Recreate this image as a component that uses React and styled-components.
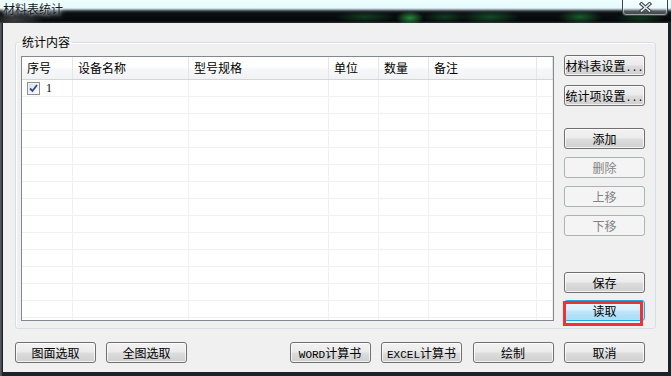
import React from "react";
import styled, { createGlobalStyle, css } from "styled-components";

const GlobalStyle = createGlobalStyle`
  html, body {
    margin: 0;
    padding: 0;
    background: #23292d;
  }
  body {
    width: 671px;
    height: 376px;
    overflow: hidden;
    font-family: "Noto Sans CJK SC", "Liberation Sans", sans-serif;
  }
`;

const Window = styled.div`
  width: 671px;
  height: 376px;
  display: flex;
  flex-direction: column;
  background: linear-gradient(to right, #3b4044 0, #6a6f73 1px, #1d2226 2px, #1d2226 100%);
  overflow: hidden;
  font-size: 12px;
  color: #000;
`;

const TitleBar = styled.div`
  height: 23px;
  flex: none;
  display: flex;
  align-items: flex-start;
  background:
    radial-gradient(ellipse 14px 7px at 410px 18px, rgba(60, 220, 90, 0.6), transparent),
    radial-gradient(ellipse 30px 6px at 365px 17px, rgba(30, 120, 55, 0.45), transparent),
    radial-gradient(ellipse 22px 6px at 445px 17px, rgba(30, 130, 60, 0.4), transparent),
    radial-gradient(ellipse 30px 7px at 490px 17px, rgba(35, 150, 65, 0.45), transparent),
    radial-gradient(ellipse 22px 7px at 580px 17px, rgba(40, 170, 70, 0.5), transparent),
    radial-gradient(ellipse 25px 6px at 640px 18px, rgba(30, 120, 55, 0.4), transparent),
    radial-gradient(ellipse 30px 6px at 15px 20px, rgba(120, 120, 120, 0.45), transparent),
    linear-gradient(
      to bottom,
      #ecfefe 0,
      #e6fafb 8px,
      #9aa6ae 9.5px,
      #343c42 11px,
      #0b0f12 13px,
      #06090b 21px,
      #2b3033 23px
    );
`;

const Title = styled.div`
  padding: 1px 0 0 3px;
  line-height: 16px;
  font-size: 12px;
  color: #0b1a26;
  text-shadow: 0 0 3px #ffffff, 0 0 6px #ffffff;
`;

const CloseButton = styled.div`
  margin-left: auto;
  margin-right: 3px;
  width: 46px;
  height: 16px;
  box-sizing: border-box;
  border: 1px solid #3d4245;
  border-top: none;
  border-radius: 0 0 4px 4px;
  background: linear-gradient(to bottom, rgba(255, 255, 255, 0.35), rgba(255, 255, 255, 0.15) 60%, rgba(200, 210, 215, 0.35));
  box-shadow: inset 0 0 0 1px rgba(255, 255, 255, 0.45);
  display: flex;
  align-items: center;
  justify-content: center;
`;

const Client = styled.div`
  flex: 1;
  margin: 0 3px 4px 3px;
  background: #f0f0f0;
  padding: 12px 12px 9px 12px;
  display: flex;
  flex-direction: column;
`;

const GroupBox = styled.fieldset`
  margin: 0;
  min-width: 0;
  padding: 6px 10px 7px 5px;
  border: 1px solid #d5dfe5;
  border-radius: 3px;
  box-shadow: inset 1px 1px 0 #ffffff;
`;

const GroupLabel = styled.legend`
  margin-left: -1px;
  padding: 0 2px;
  font-size: 12px;
  line-height: 14px;
`;

const GroupBody = styled.div`
  height: 266px;
  display: flex;
  gap: 10px;
`;

const Table = styled.div`
  flex: 1;
  margin-top: 1px;
  border: 1px solid #828790;
  background: #ffffff;
  overflow: hidden;
  display: flex;
  flex-direction: column;
`;

const COLUMNS = "51px 116px 140px 50px 50px 108px 1fr";

const HeaderRow = styled.div`
  flex: none;
  display: grid;
  grid-template-columns: ${COLUMNS};
  height: 22px;
  border-bottom: 1px solid #d5d5d5;
  background: linear-gradient(to bottom, #ffffff 0, #ffffff 45%, #f6f7f9 55%, #f1f2f4 100%);
`;

const HeaderCell = styled.div`
  border-right: 1px solid #e3e5e8;
  padding-left: 5px;
  line-height: 22px;
  white-space: nowrap;
`;

const Row = styled.div`
  flex: none;
  display: grid;
  grid-template-columns: ${COLUMNS};
  height: 16px;
  border-bottom: 1px solid #f0f0f0;
`;

const Cell = styled.div`
  border-right: 1px solid #f0f0f0;
  padding-left: 5px;
  display: flex;
  align-items: center;
  gap: 6px;
  line-height: 16px;
`;

const CheckBox = styled.span`
  width: 13px;
  height: 13px;
  box-sizing: border-box;
  border: 1px solid #8e8f8f;
  background: linear-gradient(135deg, #d9dadb 0, #f2f2f2 60%, #ffffff 100%);
  box-shadow: inset 0 0 0 1px #f4f4f4;
  display: flex;
  align-items: center;
  justify-content: center;
`;

const Number = styled.span`
  font-family: "Liberation Serif", serif;
  font-size: 12px;
`;

const SideColumn = styled.div`
  width: 81px;
  flex: none;
  display: flex;
  flex-direction: column;
`;

const Button = styled.button`
  flex: none;
  width: 81px;
  height: 21px;
  margin: 0;
  margin-top: ${(p) => (p.$mt === "auto" ? "auto" : `${p.$mt || 0}px`)};
  padding: 0;
  box-sizing: border-box;
  border: 1px solid #707070;
  border-radius: 3px;
  background: linear-gradient(to bottom, #f2f2f2 0%, #ebebeb 48%, #dddddd 52%, #cfcfcf 100%);
  box-shadow: inset 0 0 0 1px rgba(255, 255, 255, 0.75);
  font-family: "Noto Sans CJK SC", "Liberation Sans", sans-serif;
  font-size: 12px;
  line-height: 19px;
  color: #000;
  white-space: nowrap;
  text-align: center;

  ${(p) =>
    p.disabled &&
    css`
      border-color: #adb2b5;
      background: #f4f4f4;
      box-shadow: none;
      color: #838383;
    `}

  ${(p) =>
    p.$focused &&
    css`
      border-color: #2aa6de;
      background: linear-gradient(to bottom, #eaf6fd 0%, #d9f0fc 48%, #bee6fd 52%, #a9dbf6 100%);
      box-shadow: inset 0 0 0 1px #a8e2fb;
    `}
`;

const Latin = styled.span`
  font-family: "Liberation Mono", monospace;
  font-size: ${(p) => p.$size || 11}px;
`;

const FocusWrap = styled.div`
  position: relative;
  flex: none;
  margin-top: 7px;
`;

const Highlight = styled.div`
  position: absolute;
  left: -1px;
  top: 1px;
  width: 80px;
  height: 25px;
  box-sizing: border-box;
  border: 3px solid #eb3535;
  pointer-events: none;
`;

const BottomBar = styled.div`
  margin-top: 13px;
  margin-right: 11px;
  display: flex;
  gap: 10px;
`;

const ButtonGroup = styled.div`
  display: flex;
  gap: ${(p) => p.$gap}px;
  margin-left: ${(p) => (p.$right ? "auto" : "0")};
`;

const columns = ["序号", "设备名称", "型号规格", "单位", "数量", "备注", ""];

function CloseGlyph() {
  return (
    <svg width="13" height="11" viewBox="0 0 13 11">
      <g strokeLinecap="square">
        <path d="M2.5 2 L10.5 9 M10.5 2 L2.5 9" stroke="#3b3f42" strokeWidth="3.6" />
        <path d="M2.5 2 L10.5 9 M10.5 2 L2.5 9" stroke="#e6e9eb" strokeWidth="1.6" />
      </g>
    </svg>
  );
}

function CheckMark() {
  return (
    <svg width="9" height="9" viewBox="0 0 9 9">
      <path d="M1 4.5 L3.5 7 L8 1" fill="none" stroke="#2a4a9a" strokeWidth="1.8" />
    </svg>
  );
}

export default function App() {
  const rows = Array.from({ length: 15 }, (_, i) => i);
  return (
    <>
      <GlobalStyle />
      <Window>
        <TitleBar>
          <Title>材料表统计</Title>
          <CloseButton>
            <CloseGlyph />
          </CloseButton>
        </TitleBar>

        <Client>
          <GroupBox>
            <GroupLabel>统计内容</GroupLabel>
            <GroupBody>
              <Table>
                <HeaderRow>
                  {columns.map((c, i) => (
                    <HeaderCell key={i}>{c}</HeaderCell>
                  ))}
                </HeaderRow>
                {rows.map((r) => (
                  <Row key={r}>
                    {columns.map((c, i) => (
                      <Cell key={i}>
                        {r === 0 && i === 0 && (
                          <>
                            <CheckBox>
                              <CheckMark />
                            </CheckBox>
                            <Number>1</Number>
                          </>
                        )}
                      </Cell>
                    ))}
                  </Row>
                ))}
              </Table>

              <SideColumn>
                <Button>
                  材料表设置<Latin $size={10}>...</Latin>
                </Button>
                <Button $mt={9}>
                  统计项设置<Latin $size={10}>...</Latin>
                </Button>
                <Button $mt={22}>添加</Button>
                <Button $mt={8} disabled>
                  删除
                </Button>
                <Button $mt={8} disabled>
                  上移
                </Button>
                <Button $mt={8} disabled>
                  下移
                </Button>
                <Button $mt="auto">保存</Button>
                <FocusWrap>
                  <Button $focused>读取</Button>
                  <Highlight />
                </FocusWrap>
              </SideColumn>
            </GroupBody>
          </GroupBox>

          <BottomBar>
            <ButtonGroup $gap={10}>
              <Button>图面选取</Button>
              <Button>全图选取</Button>
            </ButtonGroup>
            <ButtonGroup $gap={10.5} $right>
              <Button>
                <Latin>WORD</Latin>计算书
              </Button>
              <Button>
                <Latin>EXCEL</Latin>计算书
              </Button>
              <Button>绘制</Button>
              <Button>取消</Button>
            </ButtonGroup>
          </BottomBar>
        </Client>
      </Window>
    </>
  );
}
